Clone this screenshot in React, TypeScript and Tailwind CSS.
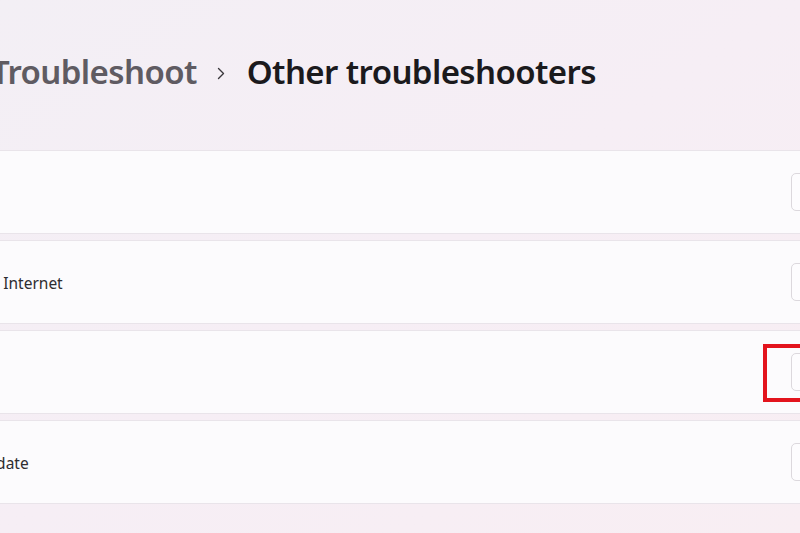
import React from "react";

const rows = [
  { label: "Audio" },
  { label: "Network and Internet" },
  { label: "Printer" },
  { label: "Windows Update" },
];

const App = () => {
  return (
    <div
      className="w-[800px] h-[533px] overflow-hidden bg-gradient-to-br from-[#f3eff5] via-[#f6eef5] to-[#f8eef3]"
      style={{ fontFamily: '"Noto Sans", "Open Sans", sans-serif' }}
    >
      <div className="flex items-center h-[150px] pb-[6px] ml-[-9px]">
        <span className="text-[33px] font-semibold tracking-[-0.6px] text-[#5f5b62]">Troubleshoot</span>
        <svg className="ml-[20px] mr-[22px] mt-[2px]" width="8" height="13" viewBox="0 0 8 13" fill="none">
          <path d="M1.5 1.5 L6.5 6.5 L1.5 11.5" stroke="#3a373c" strokeWidth="1.4" strokeLinecap="round" strokeLinejoin="round" />
        </svg>
        <span className="text-[33px] font-semibold tracking-[-0.6px] text-[#1b1a1d]">Other troubleshooters</span>
      </div>

      <div className="flex flex-col gap-[6px] mx-[-12px]">
        {rows.map((row, i) => (
          <div
            key={row.label}
            className="relative h-[84px] flex items-center justify-between bg-[#fcfbfd] border border-[#e9e4ea] rounded-[6px]"
          >
            <div className="flex items-center ml-[-84px] mt-[3px]">
              <span className="text-[15.5px] text-[#2e2d30] whitespace-nowrap">{row.label}</span>
            </div>
            <button className="mr-[-60px] w-[80px] h-[38px] rounded-[5px] border border-[#dcd8dd] bg-[#fdfcfe] text-[14px] text-[#1b1a1d]">
              Run
            </button>
            {i === 2 && (
              <div className="absolute left-[774px] top-[13px] w-[60px] h-[58px] border-[4px] border-[#e3141d]" />
            )}
          </div>
        ))}
      </div>
    </div>
  );
};

export default App;
